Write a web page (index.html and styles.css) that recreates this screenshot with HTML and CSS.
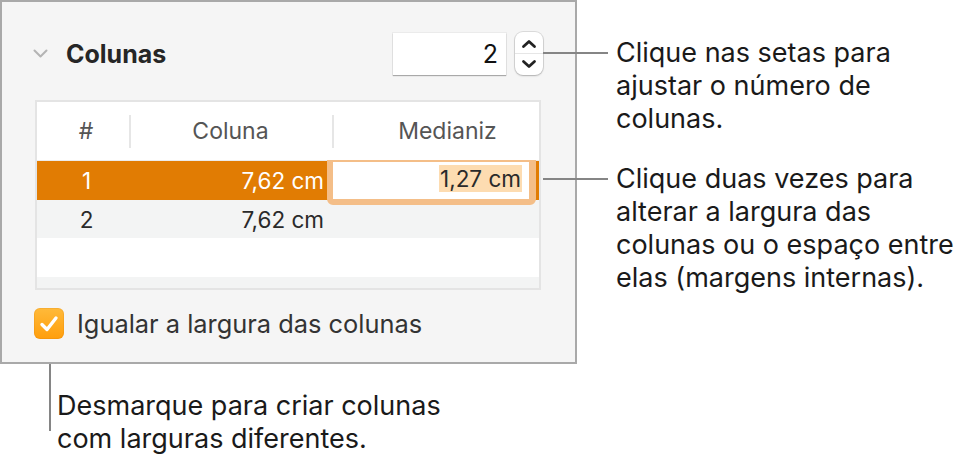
FILE: index.html
```html
<!DOCTYPE html>
<html lang="pt">
<head>
<meta charset="utf-8">
<title>Colunas</title>
<link rel="stylesheet" href="styles.css">
</head>
<body>
<div class="page">
  <div class="main">
    <section class="panel">
      <div class="panel-head">
        <svg class="chev" width="15" height="9" viewBox="0 0 15 9"><path d="M1.5 1.5 L7.5 7.5 L13.5 1.5" fill="none" stroke="#b4b4b4" stroke-width="2" stroke-linecap="round" stroke-linejoin="round"/></svg>
        <h2 class="title">Colunas</h2>
        <div class="count">
          <div class="count-field">2</div>
          <div class="stepper">
            <span class="step up"><svg width="16" height="10" viewBox="0 0 16 10"><path d="M2.5 7.5 L8 2.5 L13.5 7.5" fill="none" stroke="#222" stroke-width="2.8" stroke-linecap="round" stroke-linejoin="round"/></svg></span>
            <span class="step down"><svg width="16" height="10" viewBox="0 0 16 10"><path d="M2.5 2.5 L8 7.5 L13.5 2.5" fill="none" stroke="#222" stroke-width="2.8" stroke-linecap="round" stroke-linejoin="round"/></svg></span>
          </div>
        </div>
      </div>
      <div class="table">
        <div class="thead">
          <div class="th c1">#</div>
          <div class="th c2">Coluna</div>
          <div class="th c3">Medianiz</div>
        </div>
        <div class="row sel">
          <div class="td c1">1</div>
          <div class="td c2">7,62 cm</div>
          <div class="td c3"><div class="edit"><span class="hl">1,27 cm</span></div></div>
        </div>
        <div class="row alt">
          <div class="td c1">2</div>
          <div class="td c2">7,62 cm</div>
          <div class="td c3"></div>
        </div>
        <div class="row"></div>
        <div class="row alt"></div>
      </div>
      <div class="check">
        <span class="box"><svg width="22" height="20" viewBox="0 0 22 20"><path d="M4 10.5 L9 15.5 L18 4" fill="none" stroke="#fff" stroke-width="3.4" stroke-linecap="round" stroke-linejoin="round"/></svg></span>
        <span class="check-label">Igualar a largura das colunas</span>
      </div>
    </section>
    <div class="note note-bottom">
      <p>Desmarque para criar colunas<br>com larguras diferentes.</p>
    </div>
  </div>
  <div class="side">
    <div class="note note1"><p>Clique nas setas para<br>ajustar o número de<br>colunas.</p></div>
    <div class="note note2"><p>Clique duas vezes para<br>alterar a largura das<br>colunas ou o espaço entre<br>elas (margens internas).</p></div>
  </div>
</div>
</body>
</html>
```

FILE: styles.css
```css
body {
  margin: 0;
  background: #ffffff;
  font-family: Inter, "Noto Sans", "Liberation Sans", sans-serif;
}

.page {
  display: flex;
  width: 969px;
  height: 467px;
  overflow: hidden;
}

.main {
  width: 577px;
  flex: none;
}

.panel {
  box-sizing: border-box;
  width: 577px;
  height: 364px;
  background: #f5f5f5;
  border: 2px solid #a9a9a9;
  padding: 30px 34px 0 33px;
}

.panel-head {
  display: flex;
  align-items: center;
  height: 43px;
  margin-right: -2px;
}

.chev {
  margin-left: -2px;
  margin-right: 18px;
  flex: none;
}

.title {
  flex: 1;
  margin: 0;
  font-size: 25px;
  font-weight: 700;
  color: #262626;
}

.count {
  display: flex;
  align-items: center;
  gap: 9px;
}

.count-field {
  box-sizing: border-box;
  width: 113px;
  height: 42px;
  background: #fff;
  box-shadow: 0 1px 1px rgba(0, 0, 0, 0.28), 0 0 0 1px rgba(0, 0, 0, 0.04);
  text-align: right;
  padding-right: 8px;
  font-size: 25px;
  line-height: 42px;
  color: #111;
}

.stepper {
  width: 28px;
  height: 43px;
  border-radius: 8px;
  background: #fff;
  box-shadow: 0 0 0 1px rgba(0, 0, 0, 0.1), 0 1px 2px rgba(0, 0, 0, 0.2);
  display: flex;
  flex-direction: column;
}

.step {
  flex: 1;
  display: flex;
  align-items: center;
  justify-content: center;
}

.step.up {
  border-bottom: 1px solid #e6e6e6;
  padding-top: 2px;
}

.step.down {
  padding-bottom: 2px;
}

.table {
  box-sizing: border-box;
  margin-top: 25px;
  height: 190px;
  border: 2px solid #e4e4e4;
  background: #fff;
  overflow: hidden;
}

.thead,
.row {
  display: grid;
  grid-template-columns: 92px 203px 1fr;
}

.thead {
  height: 58px;
  border-bottom: 1px solid #ececec;
}

.th {
  position: relative;
  display: flex;
  align-items: center;
  justify-content: center;
  font-size: 23px;
  color: #555;
}

.th.c1 {
  padding-left: 6px;
}

.th.c3 {
  padding-left: 24px;
}

.th.c2::before,
.th.c3::before {
  content: "";
  position: absolute;
  left: 0;
  top: 13px;
  bottom: 12px;
  width: 2px;
  background: #e6e6e6;
}

.row {
  height: 39px;
}

.row.alt {
  background: #f3f4f4;
  height: 38px;
}

.row.sel {
  background: #e17c03;
  color: #fff;
}

.td {
  display: flex;
  align-items: center;
  font-size: 22.5px;
  color: #2a2a2a;
}

.sel .td {
  color: #fff;
}

.td.c1 {
  justify-content: center;
  padding-left: 7px;
}

.td.c2 {
  justify-content: flex-end;
  padding-right: 8px;
}

.td.c3 {
  position: relative;
}

.edit {
  position: absolute;
  left: -5px;
  top: -1px;
  width: 209px;
  height: 45px;
  box-sizing: border-box;
  border-style: solid;
  border-color: #f4be88;
  border-width: 2px 7px 6px 6px;
  border-radius: 0 0 6px 6px;
  background: #fff;
  display: flex;
  align-items: center;
  justify-content: flex-end;
  padding-right: 7px;
  padding-bottom: 5px;
}

.hl {
  display: inline-block;
  background: #fddcb1;
  color: #2a2a2a;
  font-size: 22.5px;
  line-height: 27px;
  padding: 0 1px;
}

.check {
  display: flex;
  align-items: center;
  gap: 13px;
  margin-top: 18px;
  margin-left: -1px;
}

.box {
  width: 30px;
  height: 31px;
  border-radius: 6px;
  background: linear-gradient(#ffba3a, #ff9e0c);
  box-shadow: inset 0 0 0 1px rgba(200, 110, 0, 0.15);
  display: flex;
  align-items: center;
  justify-content: center;
  flex: none;
}

.check-label {
  font-size: 25.4px;
  color: #333;
}

.note {
  position: relative;
}

.note p {
  margin: 0;
  font-size: 27px;
  line-height: 33px;
  color: #1a1a1a;
  white-space: nowrap;
}

.note-bottom {
  margin-top: 25px;
  padding-left: 57px;
}

.note-bottom::before {
  content: "";
  position: absolute;
  left: 49px;
  top: -25px;
  width: 2px;
  height: 67px;
  background: #858585;
}

.side {
  flex: 1;
  padding-left: 39px;
}

.note1 {
  margin-top: 36px;
}

.note2 {
  margin-top: 27px;
}

.note1::before,
.note2::before {
  content: "";
  position: absolute;
  left: -73px;
  top: 16px;
  width: 65px;
  height: 2px;
  background: #858585;
}
```
